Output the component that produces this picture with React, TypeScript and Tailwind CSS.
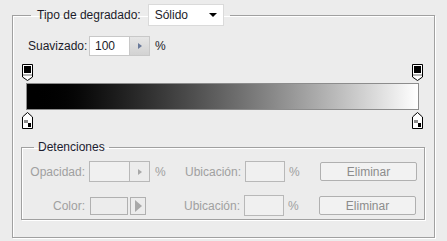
import React from 'react';

// ── Stop markers ─────────────────────────────────────────────────────────────
const OpacityStop = () => (
  <svg width="11" height="17" viewBox="0 0 11 17" className="block">
    <path d="M0.5 0.5 H10.5 V13 L5.5 16.5 L0.5 13 Z" fill="#fff" stroke="#000" />
    <rect x="2" y="2" width="7" height="7" fill="#000" />
    <rect x="1" y="10" width="9" height="2" fill="#b4b4b4" />
  </svg>
);

const ColorStop = () => (
  <svg width="11" height="17" viewBox="0 0 11 17" className="block">
    <path d="M5.5 0.5 L10.5 5 V16.5 H0.5 V5 Z" fill="#fff" stroke="#000" />
    <rect x="2" y="8" width="4" height="3" fill="#8c8c8c" />
    <rect x="6" y="11" width="3" height="4" fill="#000" />
  </svg>
);

const SpinBtn = ({ disabled }: { disabled?: boolean }) => (
  <div className={`w-[20px] h-full flex items-center justify-center border-l ${
    disabled ? 'border-[#b8b8b8] bg-[#ececec]' : 'border-[#c8c8c8] bg-gradient-to-b from-[#e6e6e6] to-[#d2d2d2]'
  }`}>
    <svg width="4" height="6" viewBox="0 0 4 6">
      <path d="M0 0 L4 3 L0 6 Z" fill={disabled ? '#a8a8a8' : '#6a7a9a'} />
    </svg>
  </div>
);

export default function App() {
  const font = "font-['Liberation_Sans',Arial,sans-serif] text-[12px]";
  return (
    <div className={`w-[447px] h-[241px] bg-[#ececec] pt-[4px] pl-[12px] ${font} text-[#1c1c2a] overflow-hidden`}>
      <fieldset className="w-[423px] h-[234px] border border-[#a0a0a0] shadow-[1px_1px_0_#fff,inset_1px_1px_0_#fff] m-0 p-0">
        <legend className="ml-[18px] px-[6px] flex items-center gap-[7px] h-[22px]">
          <span>Tipo de degradado:</span>
          <div className="w-[76px] h-[22px] bg-white border border-[#dadada] flex items-center justify-between pl-[6px] pr-[6px]">
            <span>Sólido</span>
            <svg width="8" height="4" viewBox="0 0 8 4"><path d="M0 0 H8 L4 4 Z" fill="#000" /></svg>
          </div>
        </legend>

        {/* Suavizado */}
        <div className="flex items-center mt-[10px] ml-[15px] h-[20px]">
          <span className="w-[61px]">Suavizado:</span>
          <div className="flex h-[20px] w-[61px] border border-[#c8c8c8] bg-white">
            <span className="flex-1 pl-[5px] leading-[18px]">100</span>
            <SpinBtn />
          </div>
          <span className="ml-[5px]">%</span>
        </div>

        {/* Gradient */}
        <div className="ml-[9px] mt-[8px] w-[401px]">
          <div className="flex justify-between">
            <OpacityStop />
            <OpacityStop />
          </div>
          <div className="mx-[4px] mt-[2px] h-[27px] border border-[#8c8c8c] bg-gradient-to-r from-black to-white" />
          <div className="flex justify-between mt-[2px]">
            <ColorStop />
            <ColorStop />
          </div>
        </div>

        {/* Detenciones */}
        <fieldset className="ml-[8px] mt-[9px] w-[404px] h-[82px] border border-[#a0a0a0] shadow-[1px_1px_0_#fff,inset_1px_1px_0_#fff] m-0 p-0 text-[#a0a0a0]">
          <legend className="ml-[12px] px-[4px] text-[#1c1c30]">Detenciones</legend>

          <div className="flex items-center h-[21px] mt-[5px]">
            <span className="w-[63px] text-right">Opacidad:</span>
            <div className="ml-[4px] flex h-[21px] w-[61px] border border-[#b8b8b8]">
              <span className="flex-1 bg-[#f0f0f0]" />
              <SpinBtn disabled />
            </div>
            <span className="ml-[5px] w-[30px]">%</span>
            <span className="w-[60px]">Ubicación:</span>
            <div className="h-[21px] w-[40px] border border-[#b8b8b8] bg-[#f0f0f0]" />
            <span className="ml-[4px] w-[31px]">%</span>
            <div className="w-[97px] h-[19px] border border-[#b0b0b0] rounded-[2px] bg-[#f2f2f2] flex items-center justify-center text-[#8c8c8c]">Eliminar</div>
          </div>

          <div className="flex items-center h-[21px] mt-[13px]">
            <span className="w-[63px] text-right">Color:</span>
            <div className="ml-[5px] h-[18px] w-[38px] border border-[#b0b0b0] bg-[#ececec]" />
            <div className="ml-[2px] h-[18px] w-[16px] border border-[#b0b0b0] flex items-center justify-center">
              <svg width="7" height="12" viewBox="0 0 7 12"><path d="M0 0 L7 6 L0 12 Z" fill="#a8a8a8" /></svg>
            </div>
            <span className="ml-[38px] w-[60px]">Ubicación:</span>
            <div className="h-[21px] w-[40px] border border-[#b8b8b8] bg-[#f0f0f0]" />
            <span className="ml-[4px] w-[31px]">%</span>
            <div className="w-[97px] h-[19px] border border-[#b0b0b0] rounded-[2px] bg-[#f2f2f2] flex items-center justify-center text-[#8c8c8c]">Eliminar</div>
          </div>
        </fieldset>
      </fieldset>
    </div>
  );
}
